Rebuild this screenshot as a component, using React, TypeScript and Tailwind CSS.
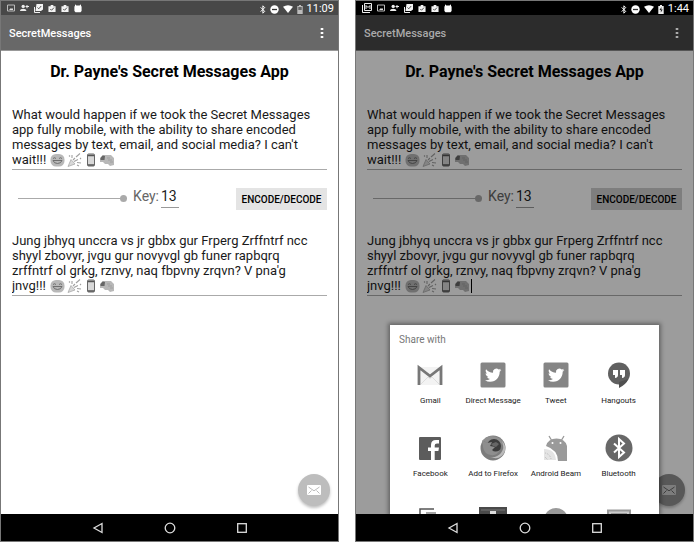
import React from 'react';

const MESSAGE =
  "What would happen if we took the Secret Messages\napp fully mobile, with the ability to share encoded\nmessages by text, email, and social media? I can't\nwait!!!";
const CODED =
  "Jung jbhyq unccra vs jr gbbx gur Frperg Zrffntrf ncc\nshyyl zbovyr, jvgu gur novyvgl gb funer rapbqrq\nzrffntrf ol grkg, rznvy, naq fbpvny zrqvn? V pna'g\njnvg!!!";

function PhotoIcon() {
  return (
    <svg width="8" height="8" viewBox="0 0 8 8" fill="none" stroke="#bbb">
      <path d="M.5 1h7v6h-7z" />
      <path d="M2 6l2-2 1 1 1-1v2z" fill="#ddd" stroke="none" />
    </svg>
  );
}

function GalleryIcon() {
  return (
    <svg width="10" height="10" viewBox="0 0 10 10" fill="none" stroke="#eee">
      <path d="M2.5.5h7v7h-7zM.5 2v7.5H8" />
      <path d="M4 6V2.5l2 2 2-2V6" />
    </svg>
  );
}

function PersonAddIcon() {
  return (
    <svg width="9" height="8" viewBox="0 0 9 8" fill="#eee">
      <circle cx="3.2" cy="2.4" r="1.7" />
      <path d="M0 7c0-3 6.400-3 6.400 0zM6.500 1h1v1H9v1H7.500v1.300h-1V3H5.500V2h1z" />
    </svg>
  );
}

function CopyCheckIcon() {
  return (
    <svg width="9" height="9" viewBox="0 0 9 9">
      <path d="M2.500 0H9v5.500L7 7H1.500z" fill="#f4f4f4" />
      <path d="M.5 3v5.500H6" fill="none" stroke="#eee" />
      <path d="M3.500 3.500l1.300 1.300L7.200 2" fill="none" stroke="#555" />
    </svg>
  );
}

function BagCheckIcon() {
  return (
    <svg width="8" height="9" viewBox="0 0 9 9">
      <path d="M.5 2H3V.5h3V2h2.500v6.500h-8z" fill="#f4f4f4" />
      <path d="M2.500 5l1.500 1.500L6.700 3.500" fill="none" stroke="#444" />
    </svg>
  );
}

function DroidHeadIcon() {
  return (
    <svg width="8" height="9" viewBox="0 0 8 9" fill="#fff">
      <path d="M1 .3l1.400 1.200h3.200L7 .3v1.500l.6 1V7L6.500 8.300h-5L.4 7V2.800l.6-1z" />
    </svg>
  );
}

function StatusBluetooth() {
  return (
    <svg width="6" height="9" viewBox="0 0 6 9" fill="none" stroke="#fff">
      <path d="M.7 2.400l4 4L2.900 8.200V.8l1.800 1.800-4 4" />
    </svg>
  );
}

function DoNotDisturb() {
  return (
    <svg width="9" height="9" viewBox="0 0 9 9">
      <circle cx="4.500" cy="4.500" r="4.200" fill="#fff" />
      <path d="M2 4.500h5" stroke="#333" strokeWidth="1.300" />
    </svg>
  );
}

function WifiIcon() {
  return (
    <svg width="10" height="8" viewBox="0 0 10 8">
      <path d="M0 1.800Q5-1.500 10 1.800L5 8z" fill="#fff" />
    </svg>
  );
}

function BatteryIcon({ charging }: { charging: boolean }) {
  return (
    <svg width="6" height="9" viewBox="0 0 6 9">
      <path d="M.3 1H2V0h2v1h1.700v8H.3z" fill={charging ? '#eee' : '#bbb'} />
      {charging ? (
        <path d="M3.500 2L1.500 5h1.300v2.500L4.700 4.500H3.300z" fill="#222" />
      ) : (
        <path d="M1.300 2h3.400v3H1.300z" fill="#666" />
      )}
    </svg>
  );
}

function Emojis() {
  return (
    <svg width="66" height="14" viewBox="0 0 66 14" aria-hidden="true">
      <rect x=".5" y="1" width="14" height="12.500" rx="5.500" fill="#b8b8b8" />
      <path d="M3 5.500q1.500-1.500 3 0M9 5.500q1.500-1.500 3 0M3 7.500h9q-1 3-4.500 3T3 7.500z" fill="none" stroke="#666" strokeWidth=".9" />
      <path d="M18 13.500l3-7 4 4.500z" fill="#d8d8d8" stroke="#a0a0a0" strokeWidth=".7" />
      <path d="M23 7l2-2M24 8.500l4-2M22 5V2M26 4l4-3.500M27 9.500l4 .5M19 2.500l1 1M27 12l2 1M30 5l1 1" stroke="#a0a0a0" strokeWidth="1.100" />
      <rect x="37.500" y="1" width="7" height="12" rx="1" fill="#d8d8d8" stroke="#666" />
      <path d="M38 2.500h6M38 12h6" stroke="#555" strokeWidth="1.500" />
      <path d="M50 5l3-3h8l3 3v7l-4 1-2-2h-3l-2-2h-3z" fill="#b8b8b8" />
      <path d="M50.500 5l2-2.500 2.500.5-.5 4h-4z" fill="#666" />
      <path d="M57 5h3M58 7h4M60 9h3" stroke="#a0a0a0" />
    </svg>
  );
}

function MessageBox({ label, value, caret }: { label: string; value: string; caret?: boolean }) {
  return (
    <div className="relative border-b border-[#aaa] pb-0.5">
      <textarea
        aria-label={label}
        rows={4}
        defaultValue={value}
        spellCheck={false}
        className="block w-full resize-none overflow-hidden bg-transparent text-[13px] leading-[15px] text-[#1a1a1a] outline-none"
      />
      <span className="absolute bottom-0.5 left-[38px] flex items-end">
        <Emojis />
        {caret && <span className="h-3.5 w-px bg-black" />}
      </span>
    </div>
  );
}

function MailIcon({ dim }: { dim: boolean }) {
  return (
    <svg width="14" height="10" viewBox="0 0 14 10">
      <rect width="14" height="10" rx="1" fill={dim ? '#ccc' : '#fff'} />
      <path d="M1.500 2L7 5.800 12.500 2M1.500 8.500l3-3M12.500 8.500l-3-3" fill="none" stroke={dim ? '#666' : '#bbb'} />
    </svg>
  );
}

function GmailIcon() {
  return (
    <svg width="26" height="26" viewBox="0 0 26 26">
      <path d="M2 5h22v18H2z" fill="#f3f3f3" />
      <path d="M4 22l7-7 2 1.500 2-1.500 7 7" fill="none" stroke="#ddd" />
      <path d="M2 23V5.500L13 14 24 5.500V23" fill="none" stroke="#777" strokeWidth="2.800" />
    </svg>
  );
}

function TwitterIcon() {
  return (
    <svg width="26" height="26" viewBox="0 0 26 26">
      <rect x=".5" y=".5" width="25" height="25" rx="1.500" fill="#858585" />
      <g transform="translate(5 5) scale(.68)">
        <path fill="#fff" d="M23.950 4.570a10 10 0 01-2.820.77 4.960 4.960 0 002.160-2.720c-.95.550-2 .95-3.130 1.180a4.920 4.920 0 00-8.380 4.480C7.690 8.090 4.070 6.130 1.640 3.160a4.820 4.820 0 00-.67 2.480c0 1.710.87 3.210 2.190 4.100a4.900 4.900 0 01-2.230-.62v.06a4.920 4.920 0 003.950 4.830 5 5 0 01-2.210.08 4.940 4.940 0 004.600 3.420A9.870 9.870 0 010 19.540a13.990 13.990 0 007.550 2.210c9.050 0 14-7.500 14-13.980 0-.21 0-.42-.02-.63a9.940 9.940 0 002.460-2.550z" />
      </g>
    </svg>
  );
}

function HangoutsIcon() {
  return (
    <svg width="26" height="26" viewBox="0 0 26 26">
      <circle cx="13" cy="11.500" r="11" fill="#606060" />
      <path d="M13 20v6q7-3.500 9.500-9z" fill="#505050" />
      <path d="M7 8h5v5q0 2.500-3 3v-3H7zM14 8h5v5q0 2.500-3 3v-3h-2z" fill="#fff" />
    </svg>
  );
}

function FacebookIcon() {
  return (
    <svg width="26" height="26" viewBox="0 0 26 26">
      <rect x="2" y="2" width="22" height="23" rx="1" fill="#5c5c5c" />
      <path d="M14 25v-9h-3v-3.500h3V10q0-5 5-5h3v3.500h-2q-2.300 0-2.300 2v2H22l-.6 3.500h-3.700v9z" fill="#fff" />
    </svg>
  );
}

function FirefoxIcon() {
  return (
    <svg width="26" height="26" viewBox="0 0 26 26">
      <circle cx="13" cy="13" r="12.500" fill="#7c7c7c" />
      <path d="M3 5q7-7 16-2 5 3 6 9l-5-4-7-2-6 2z" fill="#8f8f8f" />
      <circle cx="14" cy="11" r="7" fill="#3c3c3c" />
      <path d="M2 5l5 3 5-1-2 4 5 1-3 3q3 3 8 0-3 6-9 5-7-1-8-8z" fill="#8e8e8e" />
      <path d="M22 6q3 7-1 12-4 5-11 4 11 4 15-6 1-6-3-10z" fill="#bbb" />
      <path d="M11 9l5-2 3 2-3 3-3-1z" fill="#666" />
    </svg>
  );
}

function BeamIcon() {
  return (
    <svg width="26" height="26" viewBox="0 0 26 26">
      <path d="M6 1l3 5M21 1l-3 5" stroke="#999" strokeWidth="1.300" />
      <path d="M3 11Q5 3.500 13.500 3.500T24 11v15h-9q0-11-12-15z" fill="#9a9a9a" />
      <circle cx="9.500" cy="8" r="1" fill="#fff" />
      <circle cx="17.500" cy="8" r="1" fill="#fff" />
      <path d="M1 14q11 0 12 11H1z" fill="#e4e4e4" />
      <path d="M2 18q5 1 6 6M2 22l3 3" fill="none" stroke="#bbb" strokeDasharray="1 1" />
    </svg>
  );
}

function BluetoothIcon() {
  return (
    <svg width="28" height="28" viewBox="0 0 28 28">
      <circle cx="14" cy="14" r="13.500" fill="#686868" />
      <path d="M9 9.500l10 9-5 4.500V5l5 4.500-10 9" fill="none" stroke="#fff" strokeWidth="2" />
    </svg>
  );
}

function PageIcon() {
  return (
    <svg width="28" height="26" viewBox="0 0 28 26">
      <path d="M18 2H4v22h20" fill="none" stroke="#555" strokeWidth="1.500" />
      <path d="M10 6h10" stroke="#888" strokeWidth="1.500" />
    </svg>
  );
}

function TrayIcon() {
  return (
    <svg width="28" height="26" viewBox="0 0 28 26">
      <rect width="28" height="26" fill="#4a4a4a" />
      <path d="M2 3h24" stroke="#777" />
      <path d="M11 4h6v6h-6z" fill="#ddd" />
    </svg>
  );
}

function RoundIcon() {
  return (
    <svg width="26" height="26" viewBox="0 0 26 26">
      <circle cx="13" cy="13" r="12" fill="#999" />
    </svg>
  );
}

function NewsIcon() {
  return (
    <svg width="24" height="26" viewBox="0 0 24 26" fill="none" stroke="#999">
      <path d="M1 3.500h22V25H1z" fill="#ccc" strokeWidth="2" />
      <path d="M4 6.500h16" />
    </svg>
  );
}

const TARGETS = [
  { name: 'Gmail', icon: <GmailIcon /> },
  { name: 'Direct Message', icon: <TwitterIcon /> },
  { name: 'Tweet', icon: <TwitterIcon /> },
  { name: 'Hangouts', icon: <HangoutsIcon /> },
  { name: 'Facebook', icon: <FacebookIcon /> },
  { name: 'Add to Firefox', icon: <FirefoxIcon /> },
  { name: 'Android Beam', icon: <BeamIcon /> },
  { name: 'Bluetooth', icon: <BluetoothIcon /> },
];

const MORE_TARGETS = [<PageIcon />, <TrayIcon />, <RoundIcon />, <NewsIcon />];

function ShareDialog() {
  return (
    <section
      aria-label="Share with"
      className="absolute inset-x-[34px] bottom-0 max-h-[189px] overflow-hidden bg-white px-[9px] pt-2 shadow-[0_0_4px_2px_rgba(0,0,0,0.35)]"
    >
      <h2 className="text-[10px] leading-[14px] text-[#777]">Share with</h2>
      <div className="mt-3.5 grid grid-cols-4">
        {TARGETS.map((t) => (
          <button key={t.name} className="flex h-[73px] flex-col items-center gap-1.5">
            <span className="flex h-7 items-center">{t.icon}</span>
            <span className="text-[8px] leading-3 whitespace-nowrap text-[#222]">{t.name}</span>
          </button>
        ))}
        {MORE_TARGETS.map((icon, i) => (
          <button key={i} aria-label="More" className="flex h-[73px] justify-center">
            {icon}
          </button>
        ))}
      </div>
    </section>
  );
}

function Phone({ id, time, sharing }: { id: string; time: string; sharing: boolean }) {
  return (
    <div className="flex min-h-screen min-w-0 flex-1 flex-col border border-[#777] bg-white">
      <div className={`flex h-3.5 items-center justify-between pr-1 pl-1.5 ${sharing ? 'bg-black' : 'bg-[#484848]'}`}>
        <div className="flex items-center gap-[5px]">
          {sharing && <GalleryIcon />}
          <PhotoIcon />
          <PersonAddIcon />
          <CopyCheckIcon />
          <BagCheckIcon />
          <BagCheckIcon />
          <DroidHeadIcon />
        </div>
        <div className="flex items-center gap-1 pt-0.5">
          <StatusBluetooth />
          <DoNotDisturb />
          <WifiIcon />
          <BatteryIcon charging={sharing} />
          <span className="text-[11px] leading-3 text-white">{time}</span>
        </div>
      </div>
      <header className={`flex h-9 items-center justify-between border-b pr-3 pl-2 ${sharing ? 'border-[#555] bg-[#2c2c2c] text-[#aaa]' : 'border-[#999] bg-[#686868] text-white'}`}>
        <span className="pt-1 text-[11px] font-medium">SecretMessages</span>
        <button aria-label="More options" className="flex h-5 w-2 items-center justify-center">
          <svg width="4" height="12" viewBox="0 0 4 12" fill="currentColor">
            <path d="M.7 1h2.600v2H.7zM.7 5h2.600v2H.7zM.7 9h2.600v2H.7z" />
          </svg>
        </button>
      </header>
      <main className="relative flex-1 px-[11px] pt-[11px]">
        <h1 className="text-center text-base leading-5 font-bold text-black">Dr. Payne's Secret Messages App</h1>
        <div className="mt-[25px]">
          <MessageBox label="Message" value={MESSAGE} />
        </div>
        <div className="mt-4 flex items-start">
          <input
            type="range"
            aria-label="Key slider"
            min={0}
            max={13}
            defaultValue={13}
            className="mt-2 ml-1.5 h-2 min-w-0 flex-1 appearance-none bg-transparent bg-[linear-gradient(#aaa,#aaa)] bg-[length:100%_1px] bg-center bg-no-repeat [&::-webkit-slider-thumb]:size-[7px] [&::-webkit-slider-thumb]:appearance-none [&::-webkit-slider-thumb]:rounded-full [&::-webkit-slider-thumb]:bg-[#aaa]"
          />
          <label htmlFor={`${id}-key`} className="ml-1.5 text-sm leading-5 text-[#666]">Key:</label>
          <input
            id={`${id}-key`}
            defaultValue="13"
            className="ml-0.5 h-[22px] w-[18px] border-b border-[#999] bg-transparent pb-0.5 text-sm text-[#222] outline-none"
          />
          <button className={`mt-0.5 ml-[57px] h-[22px] w-[91px] text-[10px] font-medium whitespace-nowrap text-black ${sharing ? 'bg-[#cfcfcf]' : 'bg-[#e4e4e4]'}`}>
            ENCODE/DECODE
          </button>
        </div>
        <div className="mt-[23px]">
          <MessageBox label="Encoded message" value={CODED} caret={sharing} />
        </div>
        <button
          aria-label="Send message"
          className={`absolute right-2 bottom-2 flex size-8 items-center justify-center rounded-full shadow-[0_2px_3px_rgba(0,0,0,0.25)] ${sharing ? 'bg-[#909090]' : 'bg-[#bdbdbd]'}`}
        >
          <MailIcon dim={sharing} />
        </button>
        {sharing && (
          <div className="absolute inset-0 overflow-hidden bg-black/39">
            <ShareDialog />
          </div>
        )}
      </main>
      <nav className="flex h-[27px] items-center justify-center gap-[60px] bg-black">
        <button aria-label="Back">
          <svg width="12" height="12" viewBox="0 0 12 12" fill="none" stroke="#ddd" strokeWidth="1.300">
            <path d="M10 1.500v9L2 6z" />
          </svg>
        </button>
        <button aria-label="Home">
          <svg width="12" height="12" viewBox="0 0 12 12" fill="none" stroke="#ddd" strokeWidth="1.300">
            <circle cx="6" cy="6" r="4.800" />
          </svg>
        </button>
        <button aria-label="Recent apps">
          <svg width="12" height="12" viewBox="0 0 12 12" fill="none" stroke="#ddd" strokeWidth="1.300">
            <rect x="1.700" y="1.700" width="8.600" height="8.600" />
          </svg>
        </button>
      </nav>
    </div>
  );
}

export default function App() {
  return (
    <div className="flex min-h-screen gap-4 bg-white font-['Roboto','Liberation_Sans',sans-serif]">
      <Phone id="plain" time="11:09" sharing={false} />
      <Phone id="share" time="1:44" sharing />
    </div>
  );
}
